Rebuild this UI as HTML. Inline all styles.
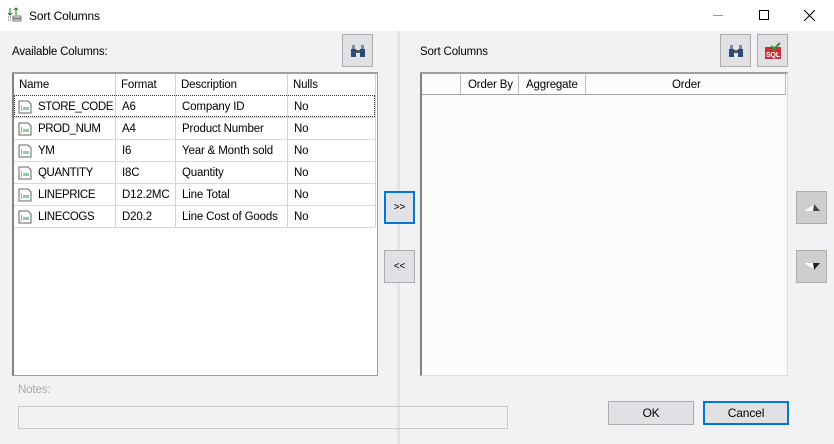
<!DOCTYPE html>
<html><head><meta charset="utf-8"><style>
*{box-sizing:border-box;margin:0;padding:0}
body{width:834px;height:444px;background:#f2f1f4;font-family:"Liberation Sans",sans-serif;font-size:11.5px;letter-spacing:-0.15px;color:#000;position:relative;overflow:hidden}
.a{position:absolute}
.btn{position:absolute;background:#e1e0e4;border:1px solid #adadad;display:flex;align-items:center;justify-content:center}
.blue{border:2px solid #0078d7}
.t{position:absolute;white-space:nowrap;line-height:14px}
.vl{position:absolute;width:1px;background:#d4d4d4}
.hl{position:absolute;height:1px;background:#d9d9d9}
.nm{letter-spacing:-0.4px}
</style></head><body>
<div class="a" style="left:0;top:0;width:834px;height:31px;background:#fff"></div>
<svg class="a" style="left:7px;top:7px" width="16" height="16" viewBox="0 0 16 16"><path d="M3 1v7M1 6l2 2 2-2" stroke="#1a7a1a" fill="none"/><path d="M9 8V1M7 3l2-2 2 2" stroke="#1a7a1a" fill="none"/><rect x="6" y="9" width="8" height="2" fill="none" stroke="#555" stroke-width=".8"/><rect x="6" y="12" width="8" height="2" fill="none" stroke="#555" stroke-width=".8"/><path d="M1 10h3M1 13h3" stroke="#555" stroke-dasharray="1 1"/></svg>
<div class="t" style="left:29px;top:9px;font-size:12px">Sort Columns</div>
<div class="a" style="left:713px;top:15px;width:10px;height:1px;background:#999"></div>
<div class="a" style="left:759px;top:10px;width:10px;height:10px;border:1px solid #000"></div>
<svg class="a" style="left:804px;top:10px" width="11" height="11"><path d="M0 0L11 11M11 0L0 11" stroke="#000"/></svg>

<div class="a" style="left:397px;top:31px;width:3px;height:413px;background:#e3e2e6"></div>

<div class="t" style="left:12px;top:45px">Available Columns:</div>
<div class="btn" style="left:342px;top:34px;width:31px;height:33px"><svg width="16" height="14" viewBox="0 0 16 14"><rect x="1" y="5" width="5" height="8" fill="#2a4a7a"/><rect x="10" y="5" width="5" height="8" fill="#2a4a7a"/><rect x="2" y="1" width="3" height="4" fill="#7a8aa0"/><rect x="11" y="1" width="3" height="4" fill="#7a8aa0"/><rect x="6" y="6" width="4" height="3" fill="#555"/></svg></div>

<div class="a" style="left:12px;top:72px;width:366px;height:304px;background:#fff;border:1px solid #a0a0a0;border-top:2px solid #a0a0a0;border-left:2px solid #828282"></div>
<div class="vl" style="left:115px;top:74px;height:153px"></div>
<div class="vl" style="left:175px;top:74px;height:153px"></div>
<div class="vl" style="left:287px;top:74px;height:153px"></div>
<div class="vl" style="left:375px;top:74px;height:153px"></div>
<div class="t" style="left:19px;top:78px">Name</div><div class="t" style="left:121px;top:78px">Format</div><div class="t" style="left:181px;top:78px">Description</div><div class="t" style="left:293px;top:78px">Nulls</div>
<div class="a" style="left:14px;top:95px;width:361px;height:22px;border:1px dotted #333"></div>
<div id="rows"></div>

<div class="btn blue" style="left:384px;top:191px;width:31px;height:33px;font-size:10px">&gt;&gt;</div>
<div class="btn" style="left:384px;top:250px;width:31px;height:33px;font-size:10px">&lt;&lt;</div>

<div class="t" style="left:420px;top:45px">Sort Columns</div>
<div class="btn" style="left:720px;top:34px;width:31px;height:33px"><svg width="16" height="14" viewBox="0 0 16 14"><rect x="1" y="5" width="5" height="8" fill="#2a4a7a"/><rect x="10" y="5" width="5" height="8" fill="#2a4a7a"/><rect x="2" y="1" width="3" height="4" fill="#7a8aa0"/><rect x="11" y="1" width="3" height="4" fill="#7a8aa0"/><rect x="6" y="6" width="4" height="3" fill="#555"/></svg></div>
<div class="btn" style="left:757px;top:34px;width:31px;height:33px"><svg width="18" height="18" viewBox="0 0 18 18"><rect x="1" y="5" width="16" height="12" fill="#c8303a"/><text x="2" y="15" font-size="7" font-weight="bold" fill="#fff" font-family="Liberation Sans">SQL</text><path d="M7 4l3 3 6-6" stroke="#2a9a2a" stroke-width="2" fill="none"/></svg></div>

<div class="a" style="left:420px;top:72px;width:368px;height:304px;background:#fbfdfb;border:1px solid #dcdcdc;border-top:2px solid #a0a0a0;border-left:2px solid #828282"></div>
<div class="a" style="left:422px;top:74px;width:364px;height:21px;border-bottom:1px solid #a0a0a0"></div>
<div class="vl" style="left:460px;top:74px;height:21px;background:#bbb"></div>
<div class="vl" style="left:518px;top:74px;height:21px;background:#bbb"></div>
<div class="vl" style="left:585px;top:74px;height:21px;background:#bbb"></div>
<div class="vl" style="left:785px;top:74px;height:21px;background:#bbb"></div>
<div class="t" style="left:468px;top:78px">Order By</div><div class="t" style="left:526px;top:78px">Aggregate</div><div class="t" style="left:672px;top:78px">Order</div>

<div class="btn" style="left:796px;top:191px;width:31px;height:33px;background:#cdcfcd"><svg width="16" height="8"><path d="M0 7L10 0L16 7Z" fill="#444"/><path d="M0 7L10 0L9 7Z" fill="#fff"/></svg></div>
<div class="btn" style="left:796px;top:250px;width:31px;height:33px;background:#cdcfcd"><svg width="16" height="8"><path d="M0 0L16 0L10 7Z" fill="#222"/><path d="M0 0L9 0L10 7Z" fill="#fff"/></svg></div>

<div class="t" style="left:18px;top:383px;color:#a8a8a8">Notes:</div>
<div class="a" style="left:18px;top:406px;width:490px;height:23px;border:1px solid #c8ccc8"></div>

<div class="btn" style="left:608px;top:401px;width:86px;height:24px;font-size:12px">OK</div>
<div class="btn blue" style="left:703px;top:401px;width:86px;height:24px;font-size:12px">Cancel</div>

<script>
var r=[["STORE_CODE","A6","Company ID"],["PROD_NUM","A4","Product Number"],["YM","I6","Year &amp; Month sold"],["QUANTITY","I8C","Quantity"],["LINEPRICE","D12.2MC","Line Total"],["LINECOGS","D20.2","Line Cost of Goods"]];
var h="";r.forEach(function(x,i){var y=96+i*22;
h+='<div class="hl" style="left:14px;top:'+(y+21)+'px;width:361px"></div>';
h+='<svg class="a" style="left:18px;top:'+(y+4)+'px" width="14" height="14" viewBox="0 0 14 14"><path d="M1 1h9l3 3v9H1z" fill="#fff" stroke="#666"/><rect x="5" y="7" width="6" height="3" fill="#7fd6a0"/><path d="M3 6h1M3 8h1M3 10h1" stroke="#555"/></svg>';
h+='<div class="t nm" style="left:38px;top:'+(y+4)+'px">'+x[0]+'</div><div class="t" style="left:122px;top:'+(y+4)+'px">'+x[1]+'</div><div class="t" style="left:182px;top:'+(y+4)+'px">'+x[2]+'</div><div class="t" style="left:294px;top:'+(y+4)+'px">No</div>';});
document.getElementById("rows").innerHTML=h;
</script>
</body></html>
